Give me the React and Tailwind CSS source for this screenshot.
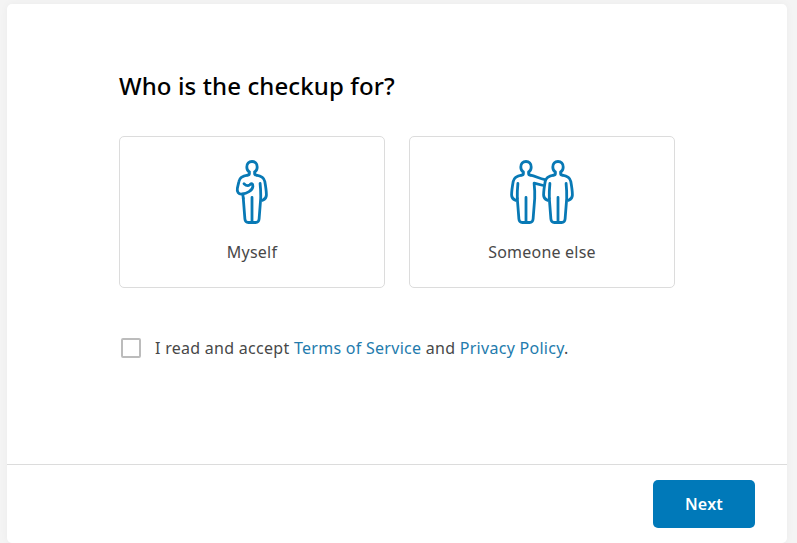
const HEAD = "M13.4 11.9V13.4Q13.4 14.9 11.6 15.2M18.6 11.9V13.4Q18.6 14.9 20.4 15.2M13.4 12C11.4 10.9 10.8 9.2 10.8 7C10.8 3.8 12.8 1.5 16 1.5S21.2 3.8 21.2 7C21.2 9.2 20.6 10.9 18.6 12";
const LEFT_ARM = "M11.6 15.2C6.6 15.9 4 17.6 3.2 21.6C2.3 26.6 1.6 31 1.6 35C1.6 38.5 3.2 39.3 5.4 40.3M7.9 23.5Q7.1 31 7.3 38.5";
const RIGHT_ARM = "M20.4 15.2C25.4 15.9 28 17.6 28.8 21.6C29.7 26.6 30.4 31 30.4 35C30.4 38.5 28.8 39.3 26.6 40.3";
const LEGS = "M16 37.5V62.2M7.3 38.5L8.9 59C9.1 61.6 10.2 62.5 12.4 62.5H19.6C21.8 62.5 22.9 61.6 23.1 59L24.7 38.5Q24.9 31 24.1 23.5";

function Svg({ children }) {
  return (
    <svg className="size-16 text-[#0879b5]" viewBox="0 0 64 64" fill="none" stroke="currentColor" strokeWidth="2.8" strokeLinecap="round" strokeLinejoin="round" aria-hidden="true">
      {children}
    </svg>
  );
}

function MyselfIcon() {
  return (
    <Svg>
      <g transform="translate(16 0)">
        <path d={HEAD} />
        <path d={RIGHT_ARM} />
        <path d={LEGS} />
        <path d="M11.6 15.2C6.6 15.9 3.6 17.4 2.9 21.6L1.4 28C0.6 32 2.6 34.4 6 34C10.5 33.4 16.6 30.8 16.9 26.4C17 23.3 15.6 23.1 13.8 24.8C11.8 26.5 9.7 25.4 8 23.7M6.8 34L7.3 38.5" />
      </g>
    </Svg>
  );
}

function SomeoneElseIcon() {
  return (
    <Svg>
      <path d={HEAD} />
      <path d={LEFT_ARM} />
      <path d="M16 37.5V62.2M7.3 38.5L8.9 59C9.1 61.6 10.2 62.5 12.4 62.5H19.6C21.8 62.5 22.9 61.6 23.1 59L24.7 38.5Q25 31 24.1 23.1L33.4 25.5" />
      <path d="M20.4 15.2C26 16.1 29 18.8 35 19.6" />
      <g transform="translate(32 0)">
        <path d={HEAD} />
        <path d={RIGHT_ARM} />
        <path d={LEGS} />
        <path d={LEFT_ARM} />
      </g>
    </Svg>
  );
}

function Choice({ icon, label }) {
  return (
    <button className="flex h-[152px] w-[266px] flex-col items-center rounded-[5px] border border-[#dcdcdc] bg-white pt-[23px]">
      {icon}
      <span className="mt-4 leading-6 tracking-[0.22px]">{label}</span>
    </button>
  );
}

export default function App() {
  return (
    <div className="h-[543px] w-[797px] overflow-hidden bg-[#f4f4f4] pl-[7px] pt-1 font-['Noto_Sans',sans-serif] text-base text-[#484848]">
      <main className="flex h-[539px] w-[780px] flex-col rounded-[5px] bg-white shadow-[0_0_8px_rgba(0,0,0,0.04)]">
        <section className="h-[460px] px-28 pt-[66px]">
          <h1 className="text-2xl font-medium leading-8 tracking-[0.11px] text-black">Who is the checkup for?</h1>
          <div className="mt-[34px] flex gap-6">
            <Choice icon={<MyselfIcon />} label="Myself" />
            <Choice icon={<SomeoneElseIcon />} label="Someone else" />
          </div>
          <div className="mt-12 flex h-6 items-center pl-0.5">
            <span role="checkbox" aria-checked="false" aria-label="Accept terms" className="size-5 rounded-[2px] border-2 border-[#bcbcbc]" />
            <p className="ml-3.5 whitespace-nowrap leading-6 tracking-[0.28px]">
              I read and accept <a href="#" className="text-[#237bad]">Terms of Service</a> and <a href="#" className="text-[#237bad]">Privacy Policy</a>.
            </p>
          </div>
        </section>
        <footer className="flex h-[79px] justify-end border-t border-[#dcdcdc] pr-8 pt-[15px]">
          <button className="h-12 w-[102px] rounded-[5px] bg-[#0079b9] font-semibold tracking-[0.25px] text-white">Next</button>
        </footer>
      </main>
    </div>
  );
}
